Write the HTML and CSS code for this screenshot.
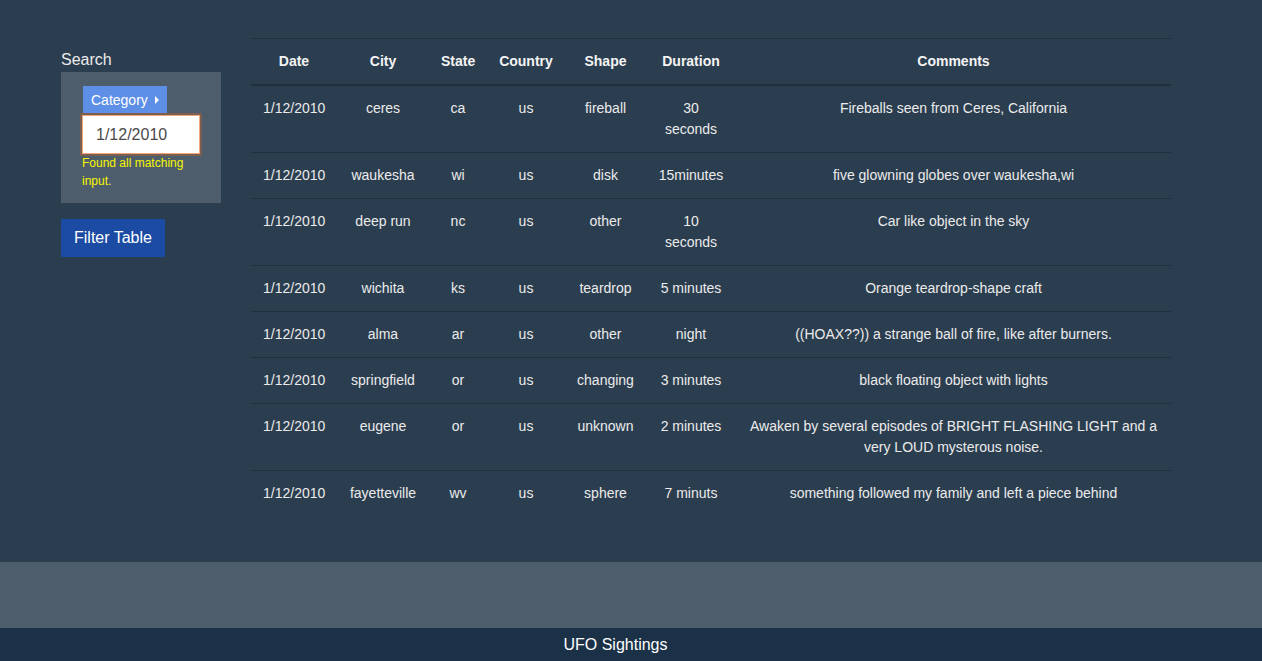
FILE: index.html
```html
<!DOCTYPE html>
<html lang="en">
<head>
<meta charset="utf-8">
<title>UFO Sightings</title>
<link rel="stylesheet" href="styles.css">
</head>
<body>
<main class="main">
  <aside class="sidebar">
    <div class="search-label">Search</div>
    <div class="well">
      <button class="category-btn" type="button">Category <span class="caret"></span></button>
      <input class="search-input" type="text" value="1/12/2010">
      <p class="found">Found all matching input.</p>
    </div>
    <button class="filter-btn" type="button">Filter Table</button>
  </aside>
  <section class="content">
    <table class="ufo-table">
      <colgroup>
        <col class="c-date"><col class="c-city"><col class="c-state"><col class="c-country"><col class="c-shape"><col class="c-duration"><col class="c-comments">
      </colgroup>
      <thead>
        <tr><th>Date</th><th>City</th><th>State</th><th>Country</th><th>Shape</th><th>Duration</th><th>Comments</th></tr>
      </thead>
      <tbody>
        <tr><td>1/12/2010</td><td>ceres</td><td>ca</td><td>us</td><td>fireball</td><td>30 seconds</td><td>Fireballs seen from Ceres, California</td></tr>
        <tr><td>1/12/2010</td><td>waukesha</td><td>wi</td><td>us</td><td>disk</td><td>15minutes</td><td>five glowning globes over waukesha,wi</td></tr>
        <tr><td>1/12/2010</td><td>deep run</td><td>nc</td><td>us</td><td>other</td><td>10 seconds</td><td>Car like object in the sky</td></tr>
        <tr><td>1/12/2010</td><td>wichita</td><td>ks</td><td>us</td><td>teardrop</td><td>5 minutes</td><td>Orange teardrop-shape craft</td></tr>
        <tr><td>1/12/2010</td><td>alma</td><td>ar</td><td>us</td><td>other</td><td>night</td><td>((HOAX??)) a strange ball of fire, like after burners.</td></tr>
        <tr><td>1/12/2010</td><td>springfield</td><td>or</td><td>us</td><td>changing</td><td>3 minutes</td><td>black floating object with lights</td></tr>
        <tr><td>1/12/2010</td><td>eugene</td><td>or</td><td>us</td><td>unknown</td><td>2 minutes</td><td>Awaken by several episodes of BRIGHT FLASHING LIGHT and a very LOUD mysterous noise.</td></tr>
        <tr><td>1/12/2010</td><td>fayetteville</td><td>wv</td><td>us</td><td>sphere</td><td>7 minuts</td><td>something followed my family and left a piece behind</td></tr>
      </tbody>
    </table>
  </section>
</main>
<div class="band"></div>
<footer class="footer">UFO Sightings</footer>
</body>
</html>
```
FILE: styles.css
```css
* { box-sizing: border-box; }
html, body { margin: 0; padding: 0; }
body {
  font-family: "Liberation Sans", Arial, Helvetica, sans-serif;
  font-size: 14px;
  line-height: 21px;
  color: #ebebeb;
  background: #2b3e50;
}
.main {
  display: flex;
  padding: 38px 0 46px 61px;
  gap: 30px;
  background: #2b3e50;
}
.sidebar {
  width: 160px;
  flex: none;
  padding-top: 11px;
}
.search-label {
  font-size: 16px;
  line-height: 22px;
  margin-bottom: 1px;
  color: #ebebeb;
}
.well {
  background: #4e5d6c;
  padding: 14px 22px 14px 21px;
  height: 131px;
}
.category-btn {
  display: flex;
  align-items: center;
  gap: 7px;
  margin-left: 1px;
  height: 28px;
  padding: 0 8px;
  border: 0;
  background: #5d8fe7;
  color: #ffffff;
  font-family: inherit;
  font-size: 14px;
}
.caret {
  width: 0;
  height: 0;
  border-top: 4px solid transparent;
  border-bottom: 4px solid transparent;
  border-left: 4px solid #ffffff;
}
.search-input {
  display: block;
  width: 118px;
  height: 39px;
  margin-top: 1px;
  padding: 0 0 0 13px;
  border: 1px solid #eea77c;
  box-shadow: 0 0 0 2px #7a5e50;
  background: #ffffff;
  color: #4a4a4a;
  font-family: inherit;
  font-size: 16px;
  outline: none;
}
.found {
  margin: 0;
  font-size: 12px;
  line-height: 18px;
  font-weight: normal;
  color: #f7f700;
}
.filter-btn {
  display: block;
  margin-top: 16px;
  height: 38px;
  padding: 0 13px;
  border: 0;
  background: #1b4ba2;
  color: #ffffff;
  font-family: inherit;
  font-size: 16px;
}
.content {
  width: 920px;
  flex: none;
}
.ufo-table {
  width: 920px;
  table-layout: fixed;
  border-collapse: collapse;
}
.c-date { width: 86px; }
.c-city { width: 92px; }
.c-state { width: 58px; }
.c-country { width: 78px; }
.c-shape { width: 81px; }
.c-duration { width: 90px; }
.c-comments { width: 435px; }
.ufo-table th,
.ufo-table td {
  padding: 12px 12px;
  text-align: center;
  vertical-align: top;
  line-height: 21px;
}
.ufo-table th {
  font-weight: bold;
  color: #f4f4f4;
  border-top: 1px solid #1f2f3d;
  border-bottom: 2px solid #1f2f3d;
}
.ufo-table td {
  border-top: 1px solid #1f2f3d;
}
.band {
  height: 66px;
  background: #4e5d6c;
}
.footer {
  height: 33px;
  padding-right: 31px;
  background: #1b3148;
  color: #ffffff;
  font-size: 16px;
  line-height: 33px;
  text-align: center;
}
```
